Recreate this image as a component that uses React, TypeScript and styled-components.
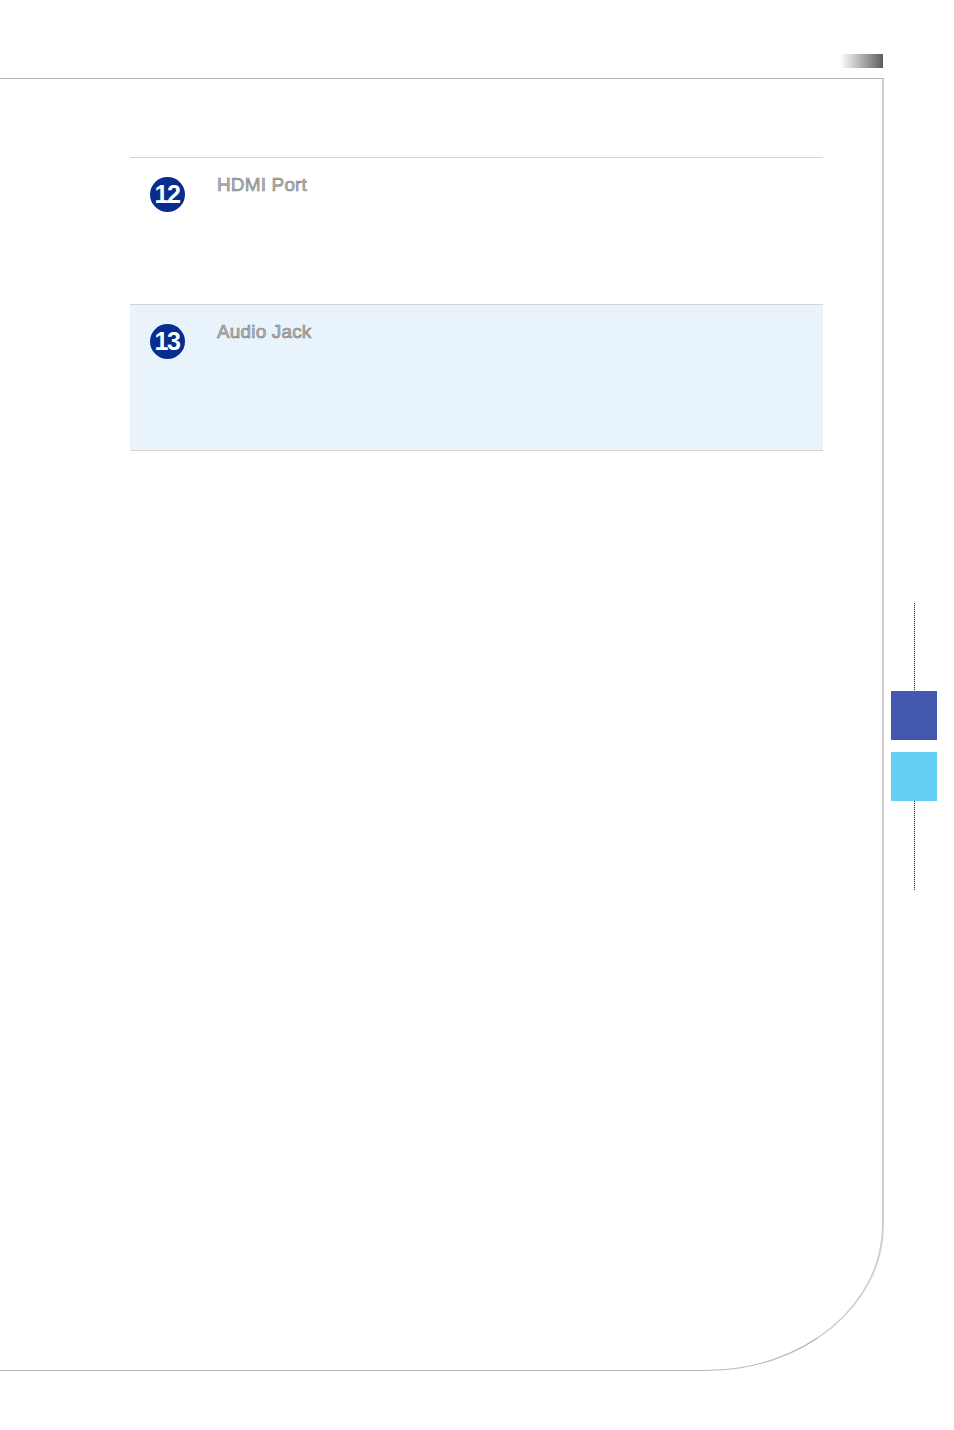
import * as React from "react";
import styled, { createGlobalStyle } from "styled-components";

const GlobalStyle = createGlobalStyle`
  html, body {
    margin: 0;
    padding: 0;
    background: #fff;
  }
  body {
    font-family: "Liberation Sans", Arial, sans-serif;
  }
`;

const Page = styled.div`
  width: 954px;
  height: 1430px;
  display: flex;
  flex-direction: column;
  overflow: hidden;
`;

const Header = styled.div`
  height: 78px;
  display: flex;
  justify-content: flex-end;
  align-items: flex-start;
  padding-right: 71px;
  box-sizing: border-box;
`;

const GradientBar = styled.div`
  margin-top: 54px;
  width: 43px;
  height: 14px;
  background: linear-gradient(to right, #ffffff 0%, #b0b0b0 50%, #5e5e5e 100%);
`;

const Body = styled.div`
  display: flex;
  align-items: flex-start;
`;

const Frame = styled.div`
  width: 884px;
  height: 1293px;
  box-sizing: border-box;
  border-top: 1px solid #b4b4b4;
  border-right: 2px solid #cfcfcf;
  border-bottom: 1px solid #b8b8b8;
  border-bottom-right-radius: 178px 146px;
  padding: 78px 0 0 130px;
`;

const Table = styled.div`
  width: 693px;
  display: flex;
  flex-direction: column;
  border-bottom: 1px solid #d4d4d4;
`;

const Row = styled.div<{ $shaded?: boolean }>`
  display: grid;
  grid-template-columns: 87px 1fr;
  height: 147px;
  box-sizing: border-box;
  border-top: 1px solid #d4d4d4;
  background: ${(p) => (p.$shaded ? "#e8f3fb" : "#ffffff")};

  &:last-child {
    height: 146px;
  }
`;

const Badge = styled.div`
  margin: 19px 0 0 20px;
  width: 35px;
  height: 35px;
  border-radius: 50%;
  background: #062d8f;
  color: #fff;
  font-weight: bold;
  font-size: 25px;
  letter-spacing: -1.5px;
  display: flex;
  align-items: center;
  justify-content: center;
  line-height: 1;
  padding-right: 1px;
  box-sizing: border-box;
`;

const Label = styled.div`
  padding-top: 16px;
  font-size: 19px;
  line-height: 22px;
  color: #b9b9b9;
  -webkit-text-stroke: 0.6px #7c7c7c;
  letter-spacing: 0.15px;
`;

const SideRail = styled.div`
  margin: 525px 0 0 7px;
  width: 46px;
  display: flex;
  flex-direction: column;
  align-items: center;
`;

const Dots = styled.div<{ $h: number }>`
  width: 1px;
  height: ${(p) => p.$h}px;
  background: repeating-linear-gradient(
    to bottom,
    #3a3a3a 0px,
    #3a3a3a 1px,
    #d8d8d8 1px,
    #d8d8d8 2px
  );
`;

const Tab = styled.div<{ $color: string; $gap?: number }>`
  width: 46px;
  height: 49px;
  margin-top: ${(p) => p.$gap || 0}px;
  background: ${(p) => p.$color};
`;

const items = [
  { n: "12", label: "HDMI Port" },
  { n: "13", label: "Audio Jack" },
];

export default function App() {
  return (
    <Page>
      <GlobalStyle />
      <Header>
        <GradientBar />
      </Header>
      <Body>
        <Frame>
          <Table>
            {items.map((it, i) => (
              <Row key={it.n} $shaded={i % 2 === 1}>
                <Badge>{it.n}</Badge>
                <Label>{it.label}</Label>
              </Row>
            ))}
          </Table>
        </Frame>
        <SideRail>
          <Dots $h={88} />
          <Tab $color="#4356b0" />
          <Tab $color="#66cff5" $gap={12} />
          <Dots $h={89} />
        </SideRail>
      </Body>
    </Page>
  );
}
